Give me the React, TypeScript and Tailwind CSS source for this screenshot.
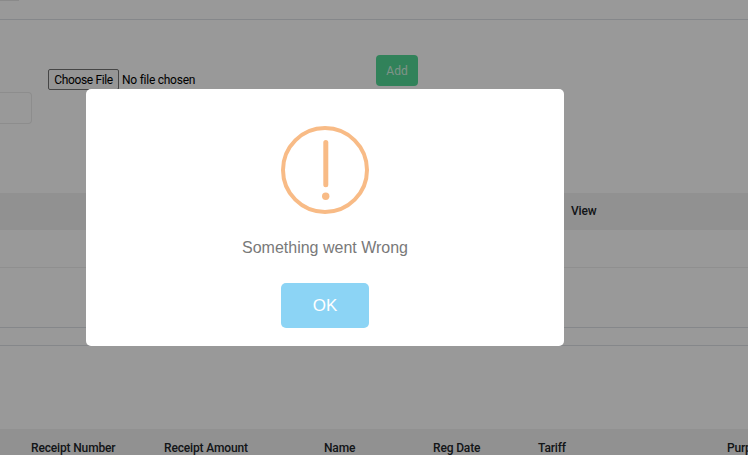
function TableHeader({ className, children }: { className: string; children: React.ReactNode }) {
  return <div className={`relative bg-[#f2f2f2] font-medium tracking-[-0.15px] text-[#212529] ${className}`}>{children}</div>
}

function AlertIcon() {
  return (
    <svg width="88" height="88" viewBox="0 0 88 88" fill="none" className="block">
      <circle cx="44" cy="44" r="42" stroke="#f8bb86" strokeWidth="4" />
      <line x1="44.8" y1="16.5" x2="44.8" y2="58.8" stroke="#f8bb86" strokeWidth="5" strokeLinecap="round" />
      <circle cx="44.7" cy="70.3" r="3.7" fill="#f8bb86" />
    </svg>
  )
}

const receiptColumns = [
  { label: 'Receipt Number', width: 'w-[133px]' },
  { label: 'Receipt Amount', width: 'w-[160px]' },
  { label: 'Name', width: 'w-[109px]' },
  { label: 'Reg Date', width: 'w-[105px]' },
  { label: 'Tariff', width: 'w-[189px]' },
  { label: 'Purpose', width: 'w-[80px]' },
]

export default function App() {
  return (
    <div className="relative h-[455px] w-[748px] overflow-hidden bg-white font-['Roboto',sans-serif] text-[12px] text-black">
      {/* background page */}
      <div className="h-px w-[19px] rounded-br border-r border-b border-[#e6e6e6]" />
      <div className="mt-[18px] border-t border-[#dee2e6]" />

      <div className="flex h-[173px] items-start">
        <div className="mt-[72px] h-[32px] w-[32px] shrink-0 rounded-r border border-l-0 border-[#ebebeb]" />
        <div className="ml-4 mt-[49px] flex w-[328px] shrink-0 items-center">
          <button className="h-[21px] w-[71px] rounded-[2px] border border-[#767676] bg-[#f8f8f8] text-[12px] tracking-[-0.35px]">
            Choose File
          </button>
          <span className="ml-[3px] whitespace-nowrap tracking-[-0.25px]">No file chosen</span>
        </div>
        <button className="mt-[35px] h-[31px] w-[42px] rounded-[4px] bg-[#53d996] text-[12px] text-white/75">Add</button>
      </div>

      <TableHeader className="h-[37px]">
        <span className="absolute left-[571px] top-[9px]">View</span>
      </TableHeader>
      <div className="h-[38px] border-b border-[#eeeeee]" />
      <div className="h-[60px] border-b border-[#dee2e6]" />
      <div className="h-[18px] border-b border-[#dee2e6]" />

      <TableHeader className="mt-[83px] h-[30px]">
        <div className="flex pl-[31px] pt-[10px]">
          {receiptColumns.map((col) => (
            <span key={col.label} className={`shrink-0 whitespace-nowrap ${col.width}`}>
              {col.label}
            </span>
          ))}
        </div>
      </TableHeader>

      {/* overlay */}
      <div className="absolute inset-0 bg-black/40" />

      {/* alert */}
      <div className="absolute left-[86px] top-[89px] flex h-[257px] w-[478px] flex-col items-center rounded-[5px] bg-white font-['Liberation_Sans',sans-serif]">
        <div className="mt-[37px]">
          <AlertIcon />
        </div>
        <p className="mt-[22px] text-[16px] leading-[24px] text-[#797979]">Something went Wrong</p>
        <button className="mt-[23px] h-[45px] w-[88px] rounded-[5px] bg-[#8cd4f5] text-[17px] text-white">OK</button>
      </div>
    </div>
  )
}
